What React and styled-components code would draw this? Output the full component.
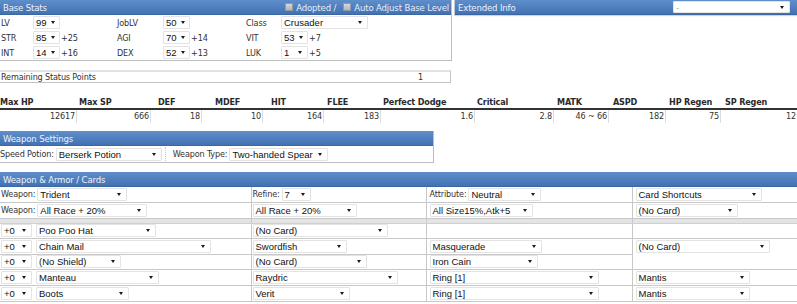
import React from "react";
import styled, { createGlobalStyle } from "styled-components";

const GlobalStyle = createGlobalStyle`
  body {
    margin: 0;
    background: #fff;
    font-family: "DejaVu Sans Condensed", "DejaVu Sans", sans-serif;
    font-stretch: condensed;
    font-size: 9px;
    letter-spacing: -0.15px;
    color: #333;
  }
`;

const baseRows = [
  [["LV", "99"], ["JobLV", "50"], ["Class", "Crusader", null, 87]],
  [["STR", "85", "+25"], ["AGI", "70", "+14"], ["VIT", "53", "+7"]],
  [["INT", "14", "+16"], ["DEX", "52", "+13"], ["LUK", "1", "+5"]],
];

const statHeads = [
  ["Max HP", 79], ["Max SP", 79], ["DEF", 57], ["MDEF", 56], ["HIT", 56], ["FLEE", 56],
  ["Perfect Dodge", 94], ["Critical", 80], ["MATK", 56], ["ASPD", 56], ["HP Regen", 56], ["SP Regen", 72],
];

const statValues = [
  ["12617", 77], ["666", 74], ["18", 51], ["10", 61], ["164", 61], ["183", 57],
  ["1.6", 94], ["2.8", 79], ["46 ~ 66", 55], ["182", 57], ["75", 55], ["12", 77],
];

const App = () => {
  return (
    <Page>
      <GlobalStyle />
      <TopRow>
        <BasePanel>
          <PanelHead>
            <span>Base Stats</span>
            <HeadOptions>
              <Check /> Adopted / <Check /> Auto Adjust Base Level
            </HeadOptions>
          </PanelHead>
          <StatGrid>
            {baseRows.map((row) =>
              row.map(([label, val, bonus, w]) => (
                <React.Fragment key={label}>
                  <Label>{label}</Label>
                  <Cell>
                    <Select $w={w || 27}>{val}</Select>
                    {bonus && <Bonus>{bonus}</Bonus>}
                  </Cell>
                </React.Fragment>
              ))
            )}
          </StatGrid>
        </BasePanel>
        <ExtPanel>
          <PanelHead>
            <span>Extended Info</span>
            <Select $w={117} $h={12} $dark>-</Select>
          </PanelHead>
        </ExtPanel>
      </TopRow>

      <Remaining>
        <span>Remaining Status Points</span>
        <RemainValue>1</RemainValue>
      </Remaining>

      <StatsTable>
        <StatRow>
          {statHeads.map(([h, w]) => (
            <StatHead key={h} $w={w}>{h}</StatHead>
          ))}
        </StatRow>
        <StatRow>
          {statValues.map(([v, w], i) => (
            <StatValue key={i} $w={w}>{v}</StatValue>
          ))}
        </StatRow>
      </StatsTable>

      <WeaponSettings>
        <PanelHead>
          <span>Weapon Settings</span>
        </PanelHead>
        <SettingsRow>
          <InlineLabel>Speed Potion:</InlineLabel>
          <Select $w={106}>Berserk Potion</Select>
          <Divider />
          <InlineLabel>Weapon Type:</InlineLabel>
          <Select $w={99}>Two-handed Spear</Select>
        </SettingsRow>
      </WeaponSettings>

      <GearPanel>
        <PanelHead>
          <span>Weapon &amp; Armor / Cards</span>
        </PanelHead>
        <GearTable>
          <colgroup>
            <col style={{ width: 251 }} />
            <col style={{ width: 175 }} />
            <col style={{ width: 206 }} />
            <col style={{ width: 165 }} />
          </colgroup>
          <tbody>
            <Tr $h={15}>
              <Td>
                <InlineLabel>Weapon:</InlineLabel>
                <Select $w={90}>Trident</Select>
              </Td>
              <Td>
                <InlineLabel>Refine:</InlineLabel>
                <Select $w={29}>7</Select>
              </Td>
              <Td $pad={4}>
                <InlineLabel>Attribute:</InlineLabel>
                <Select $w={73}>Neutral</Select>
              </Td>
              <Td $pad={4}>
                <Select $w={126}>Card Shortcuts</Select>
              </Td>
            </Tr>
            <Tr $h={16}>
              <Td>
                <InlineLabel>Weapon:</InlineLabel>
                <Select $w={110}>All Race + 20%</Select>
              </Td>
              <Td>
                <Select $w={104}>All Race + 20%</Select>
              </Td>
              <Td $pad={4}>
                <Select $w={103}>All Size15%,Atk+5</Select>
              </Td>
              <Td $pad={4}>
                <Select $w={102}>(No Card)</Select>
              </Td>
            </Tr>
            <Tr $h={5}>
              <Band />
              <Band />
              <Band />
              <Band />
            </Tr>
            <Tr $h={15}>
              <Td>
                <Refine />
                <Select $w={120}>Poo Poo Hat</Select>
              </Td>
              <Td>
                <Select $w={135}>(No Card)</Select>
              </Td>
              <Td />
              <Td />
            </Tr>
            <Tr $h={16}>
              <Td>
                <Refine />
                <Select $w={175}>Chain Mail</Select>
              </Td>
              <Td>
                <Select $w={94}>Swordfish</Select>
              </Td>
              <Td $pad={4}>
                <Select $w={112}>Masquerade</Select>
              </Td>
              <Td $pad={4} rowSpan={2} style={{ verticalAlign: "top", paddingTop: 1 }}>
                <Select $w={134}>(No Card)</Select>
              </Td>
            </Tr>
            <Tr $h={15}>
              <Td>
                <Refine />
                <Select $w={85}>(No Shield)</Select>
              </Td>
              <Td>
                <Select $w={114}>(No Card)</Select>
              </Td>
              <Td $pad={4}>
                <Select $w={108}>Iron Cain</Select>
              </Td>
            </Tr>
            <Tr $h={16}>
              <Td>
                <Refine />
                <Select $w={123}>Manteau</Select>
              </Td>
              <Td>
                <Select $w={145}>Raydric</Select>
              </Td>
              <Td $pad={4}>
                <Select $w={169}>Ring [1]</Select>
              </Td>
              <Td $pad={4}>
                <Select $w={114}>Mantis</Select>
              </Td>
            </Tr>
            <Tr $h={16}>
              <Td>
                <Refine />
                <Select $w={93}>Boots</Select>
              </Td>
              <Td>
                <Select $w={97}>Verit</Select>
              </Td>
              <Td $pad={4}>
                <Select $w={169}>Ring [1]</Select>
              </Td>
              <Td $pad={4}>
                <Select $w={114}>Mantis</Select>
              </Td>
            </Tr>
          </tbody>
        </GearTable>
      </GearPanel>
    </Page>
  );
};

const Refine = () => (
  <Select $w={31} $mr={4}>
    +0
  </Select>
);

export default App;

const Page = styled.div`
  width: 797px;
  height: 304px;
  overflow: hidden;
`;

const TopRow = styled.div`
  display: flex;
  align-items: flex-start;
  gap: 2px;
`;

const BasePanel = styled.div`
  width: 451px;
  border-right: 1px solid #bdbdbd;
  border-bottom: 1px solid #bdbdbd;
`;

const ExtPanel = styled.div`
  flex: 1;
  border-left: 1px solid #c8c8c8;
  box-shadow: 0 1px 1px #d4d4d4;
`;

const PanelHead = styled.div`
  height: 15px;
  box-sizing: border-box;
  padding: 0 7px 0 3px;
  display: flex;
  align-items: center;
  justify-content: space-between;
  background: linear-gradient(#5e8fcb, #4272b3);
  border-bottom: 1px solid #3a67a3;
  color: #eef3fb;
  font-size: 9.5px;
  white-space: nowrap;
`;

const HeadOptions = styled.span`
  display: flex;
  align-items: center;
  gap: 3px;
  margin-right: -5px;
  color: #e6eefa;
`;

const Check = styled.span`
  display: inline-block;
  width: 8px;
  height: 8px;
  box-sizing: border-box;
  border: 1px solid #8f9aa8;
  background: linear-gradient(#d8d8d8, #b4b4b4);
  margin-left: 4px;
`;

const StatGrid = styled.div`
  display: grid;
  grid-template-columns: 33px 83px 47px 82px 36px 1fr;
  grid-auto-rows: 15px;
  align-items: center;
`;

const Label = styled.span`
  padding-left: 1px;
`;

const Cell = styled.span`
  display: flex;
  align-items: center;
`;

const Bonus = styled.span`
  margin-left: 1px;
`;

const Select = styled.span`
  display: inline-flex;
  align-items: center;
  justify-content: space-between;
  flex: none;
  width: ${(p) => p.$w}px;
  height: ${(p) => p.$h || 13}px;
  box-sizing: border-box;
  padding: 0 5px 0 2px;
  margin-right: ${(p) => p.$mr || 0}px;
  background: #fff;
  border: 1px solid #e3e3e3;
  border-radius: 1px;
  font-family: "Liberation Sans", Arial, sans-serif;
  font-stretch: normal;
  letter-spacing: 0;
  font-size: ${(p) => (p.$dark ? 8 : 9.5)}px;
  color: ${(p) => (p.$dark ? "#888" : "#111")};
  white-space: nowrap;
  vertical-align: middle;

  &::after {
    content: "";
    margin-left: 4px;
    border-left: 2.5px solid transparent;
    border-right: 2.5px solid transparent;
    border-top: 3px solid #1a1a1a;
  }
`;

const Remaining = styled.div`
  margin-top: 9px;
  width: 451px;
  height: 13px;
  box-sizing: border-box;
  display: flex;
  align-items: center;
  justify-content: space-between;
  border-top: 2px solid #e2e2e2;
  border-bottom: 1px solid #c4c4c4;
  border-right: 1px solid #c4c4c4;
  padding-left: 1px;
`;

const RemainValue = styled.span`
  width: 59px;
  text-align: center;
`;

const StatsTable = styled.div`
  margin-top: 14px;
`;

const StatRow = styled.div`
  display: flex;
`;

const StatHead = styled.div`
  width: ${(p) => p.$w}px;
  flex: none;
  height: 11px;
  line-height: 10px;
  font-weight: bold;
  color: #2a2a2a;
  border-bottom: 2px solid #333;
  white-space: nowrap;
`;

const StatValue = styled.div`
  width: ${(p) => p.$w}px;
  flex: none;
  box-sizing: border-box;
  height: 13px;
  line-height: 13px;
  text-align: right;
  padding-right: 1px;
  border-right: 1px solid #ddd;
  color: #333;
`;

const WeaponSettings = styled.div`
  margin-top: 8px;
  width: 433px;
  border-right: 1px solid #bdbdbd;
  border-bottom: 1px solid #bdbdbd;
`;

const SettingsRow = styled.div`
  height: 16px;
  display: flex;
  align-items: center;
`;

const InlineLabel = styled.span`
  margin-right: 2px;
  vertical-align: middle;
`;

const Divider = styled.span`
  width: 1px;
  height: 14px;
  margin: 0 6px 0 3px;
  border-left: 1px dotted #c8c8c8;
`;

const GearPanel = styled.div`
  margin-top: 9px;
`;

const GearTable = styled.table`
  width: 797px;
  table-layout: fixed;
  border-collapse: collapse;
  font-size: 9px;
`;

const Tr = styled.tr`
  height: ${(p) => p.$h}px;
`;

const Td = styled.td`
  padding: 0 0 0 ${(p) => (p.$pad ?? 2) - 1}px;
  border-right: 1px solid #c8c8c8;
  border-bottom: 1px solid #c8c8c8;
  white-space: nowrap;
  overflow: hidden;
  &:first-child {
    padding-left: 1px;
  }
`;

const Band = styled.td`
  padding: 0;
  background: #e4e4e4;
  border-right: 1px solid #c8c8c8;
  border-bottom: 1px solid #d0d0d0;
`;
